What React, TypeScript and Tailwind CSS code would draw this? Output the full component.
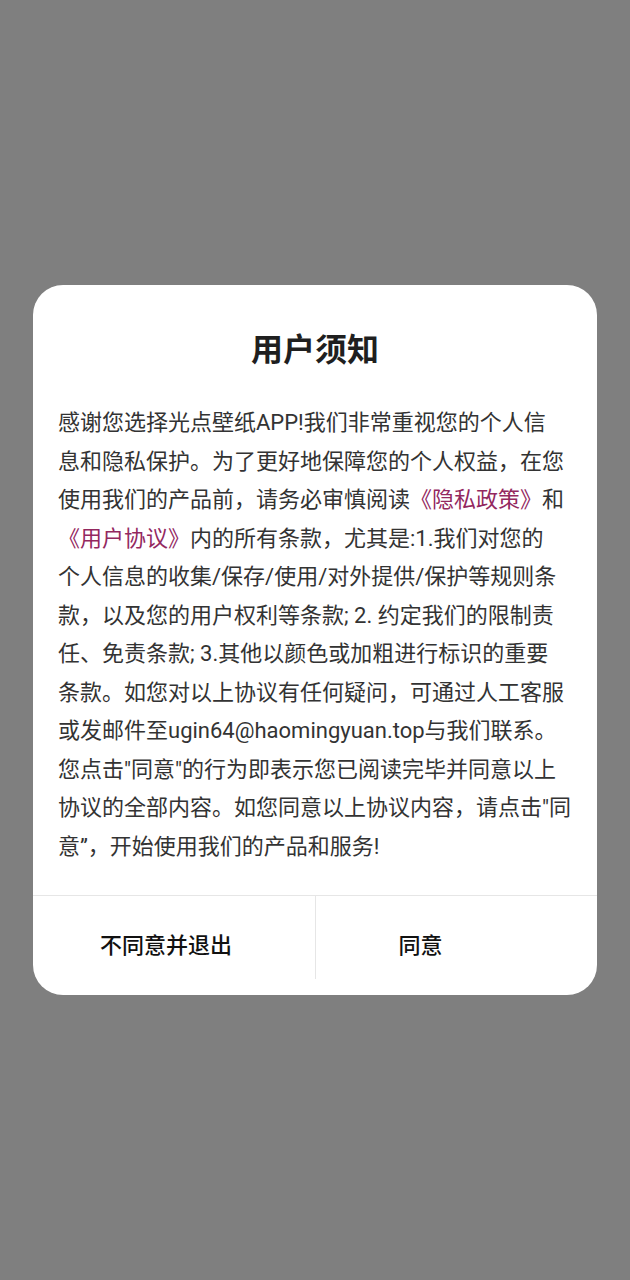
import React from "react";

const lines: React.ReactNode[] = [
  "感谢您选择光点壁纸APP!我们非常重视您的个人信",
  "息和隐私保护。为了更好地保障您的个人权益，在您",
  <>
    使用我们的产品前，请务必审慎阅读<span className="text-[#93285f]">《隐私政策》</span>和
  </>,
  <>
    <span className="text-[#93285f]">《用户协议》</span>内的所有条款，尤其是:1.我们对您的
  </>,
  "个人信息的收集/保存/使用/对外提供/保护等规则条",
  "款，以及您的用户权利等条款; 2. 约定我们的限制责",
  "任、免责条款; 3.其他以颜色或加粗进行标识的重要",
  "条款。如您对以上协议有任何疑问，可通过人工客服",
  "或发邮件至ugin64@haomingyuan.top与我们联系。",
  "您点击\"同意\"的行为即表示您已阅读完毕并同意以上",
  "协议的全部内容。如您同意以上协议内容，请点击\"同",
  "意”，开始使用我们的产品和服务!",
];

const App = () => {
  return (
    <div
      className="flex h-[1280px] w-full items-center justify-center bg-[#7f7f7f]"
      style={{ fontFamily: "Roboto, 'Noto Sans CJK SC', sans-serif" }}
    >
      <div className="flex h-[710px] w-[564px] flex-col rounded-[30px] bg-white">
        {/* Title */}
        <h1 className="pt-[45px] text-center text-[32px] font-bold leading-[40px] text-[#1f1f1f]">
          用户须知
        </h1>

        {/* Body */}
        <div className="mt-[34px] px-[25px] text-[22px] leading-[38.5px] text-[#333333]">
          {lines.map((line, i) => (
            <p key={i} className="whitespace-nowrap">
              {line}
            </p>
          ))}
        </div>

        {/* Buttons */}
        <div className="mt-auto flex h-[100px] border-t border-[#e6e6e6]">
          <button className="flex w-[282px] items-center justify-center pr-4 text-[22px] font-medium text-[#111111]">
            不同意并退出
          </button>
          <div className="h-[83px] w-px bg-[#e6e6e6]" />
          <button className="flex flex-1 items-center justify-center pr-[72px] text-[22px] font-medium text-[#111111]">
            同意
          </button>
        </div>
      </div>
    </div>
  );
};

export default App;
